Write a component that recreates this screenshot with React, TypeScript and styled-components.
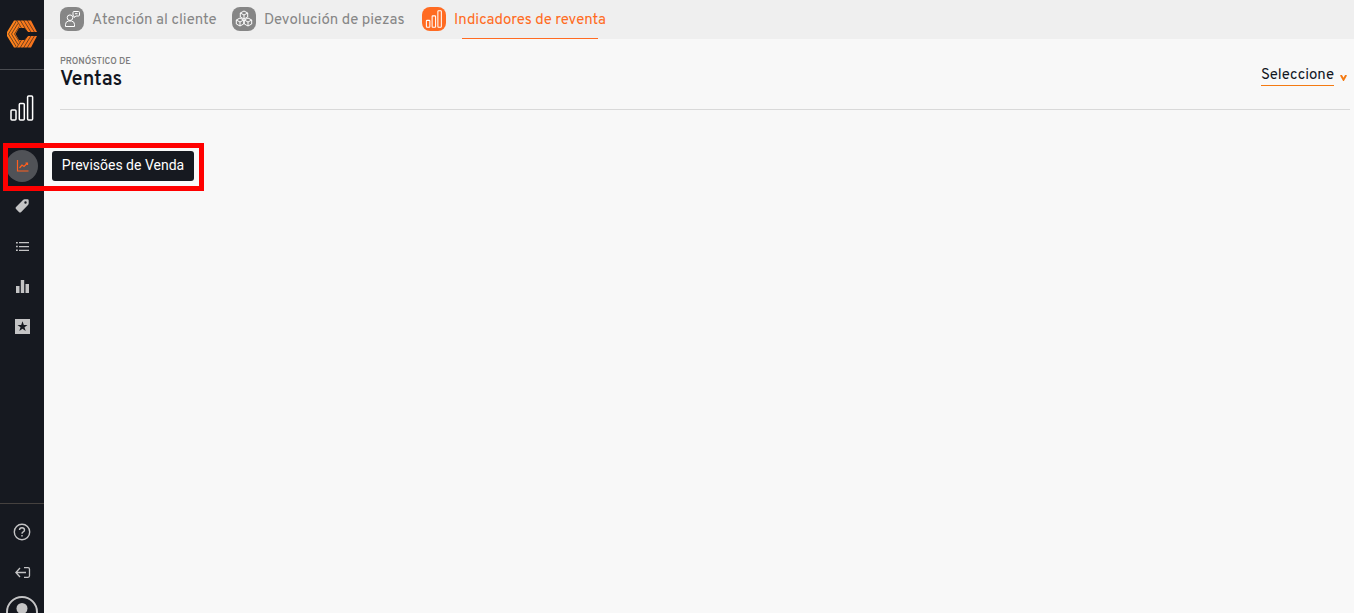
import React from "react";
import styled, { createGlobalStyle, css } from "styled-components";

const GlobalStyle = createGlobalStyle`
  * { box-sizing: border-box; }
  body {
    margin: 0;
    background: #f8f8f8;
    color: #12161f;
    font-family: Overpass, Roboto, "Liberation Sans", sans-serif;
  }
`;

const Shell = styled.div`
  display: flex;
  min-height: 100vh;
`;

const Sidebar = styled.aside`
  display: flex;
  flex-direction: column;
  flex: none;
  width: 44px;
  height: 100vh;
  background: #161920;
  color: #c4c4c5;
`;

const Brand = styled.a`
  display: flex;
  align-items: center;
  justify-content: center;
  height: 70px;
  padding-bottom: 1px;
  border-bottom: 1px solid #4a4c51;
`;

const Module = styled.div`
  display: flex;
  align-items: center;
  justify-content: center;
  height: 76px;
  color: #fff;
`;

const Menu = styled.nav`
  display: flex;
  flex-direction: column;
  flex: 1;
`;

const MenuItem = styled.div`
  position: relative;
  display: flex;
  align-items: center;
  justify-content: center;
  height: 40px;
`;

const IconButton = styled.button<{ $active?: boolean }>`
  display: flex;
  align-items: center;
  justify-content: center;
  width: 32px;
  height: 32px;
  padding: 0;
  border: 0;
  border-radius: 50%;
  background: ${(p) => (p.$active ? "#505257" : "transparent")};
  color: ${(p) => (p.$active ? "#ff5f1f" : "inherit")};
  cursor: pointer;
`;

const Tooltip = styled.span`
  position: absolute;
  top: 5px;
  left: 52px;
  width: 142px;
  padding-bottom: 2px;
  border-radius: 3px;
  background: #161920;
  color: #fff;
  font-family: Roboto, "Liberation Sans", sans-serif;
  font-size: 14px;
  font-weight: 400;
  line-height: 28px;
  text-align: center;
  white-space: nowrap;
`;

const Highlight = styled.span`
  position: absolute;
  top: -3px;
  left: 3px;
  width: 201px;
  height: 48px;
  border: 5px solid #f00;
  pointer-events: none;
`;

const SidebarFooter = styled.div`
  display: flex;
  flex-direction: column;
  height: 110px;
  padding-top: 8px;
  border-top: 1px solid #45413f;
  overflow: hidden;
`;

const FooterItem = styled(MenuItem)`
  flex: none;
`;

const Main = styled.main`
  flex: 1;
  min-width: 0;
`;

const Tabs = styled.nav`
  display: flex;
  gap: 16px;
  height: 39px;
  padding-left: 16px;
  background: #efefef;
`;

const Tab = styled.a<{ $active?: boolean }>`
  position: relative;
  display: flex;
  align-items: flex-start;
  gap: 8px;
  padding-top: 7px;
  color: ${(p) => (p.$active ? "#ff6b22" : "#868686")};
  font-size: 15px;
  line-height: 24px;
  text-decoration: none;
  white-space: nowrap;
  ${(p) =>
    p.$active &&
    css`
      &::after {
        content: "";
        position: absolute;
        right: 8px;
        bottom: 0;
        left: 40px;
        height: 1px;
        background: #ff6b22;
      }
    `}
`;

const TabIcon = styled.span<{ $active?: boolean }>`
  display: flex;
  align-items: center;
  justify-content: center;
  width: 24px;
  height: 24px;
  border-radius: 8px;
  background: ${(p) => (p.$active ? "#ff6b22" : "#868686")};
  color: #fff;
`;

const TabLabel = styled.span<{ $width: number }>`
  width: ${(p) => p.$width}px;
  padding-top: 2px;
`;

const PageHeader = styled.header`
  display: flex;
  align-items: flex-start;
  justify-content: space-between;
  height: 71px;
  margin: 0 4px 0 16px;
  padding-top: 16px;
  border-bottom: 1px solid #d9d9d9;
`;

const Heading = styled.div`
  padding-top: 1px;
`;

const Eyebrow = styled.p`
  margin: 0;
  color: #7c7c7c;
  font-size: 9px;
  font-weight: 600;
  line-height: 12px;
  text-transform: uppercase;
`;

const Title = styled.h1`
  margin: 0;
  font-size: 20px;
  font-weight: 600;
  line-height: 24px;
`;

const Picker = styled.label`
  display: flex;
  align-items: center;
  gap: 6px;
  padding: 7px 3px 0 0;
`;

const Select = styled.select`
  appearance: none;
  width: 73px;
  height: 24px;
  padding: 4px 0 0;
  border: 0;
  border-bottom: 1px solid #f47a12;
  border-radius: 0;
  background: transparent;
  color: #12161f;
  font: inherit;
  font-size: 15px;
`;

const Caret = styled.svg`
  margin-top: 8px;
`;

const Bars = ({ size, stroke }: { size: number; stroke: number }) => (
  <svg width={size} height={size} viewBox="0 0 24 26" fill="none" stroke="currentColor" strokeWidth={stroke}>
    <rect x="1" y="15" width="5" height="10" rx="1" />
    <rect x="9.300" y="8.500" width="5" height="16.500" rx="1" />
    <rect x="17.600" y="1" width="5" height="24" rx="1" />
  </svg>
);

const LogoHalf = () => (
  <>
    <path d="M7 .500H24L30 12H21L17.500 8H12L8.500 14H0V12Z" fill="url(#brand)" />
    <g fill="none" stroke="#161920" strokeWidth="0.600">
      <path clipPath="url(#arm)" d="M9.500 0L17.500 13M13 0L21 13M16.500 0L24.500 13M20 0L28 13" />
      <path clipPath="url(#side)" d="M11 -1.500L1.500 14M12.500 1L4.500 14M14.500 3L7.500 14" />
    </g>
  </>
);

const Logo = () => (
  <svg width="30" height="28" viewBox="0 0 30 28" aria-label="Inicio">
    <defs>
      <linearGradient id="brand" x1="0" y1="0" x2="1" y2="0">
        <stop offset="0" stopColor="#ff861c" />
        <stop offset="1" stopColor="#f4701c" />
      </linearGradient>
      <clipPath id="arm">
        <path d="M8.500 0H24L30 12H20L17 8H13.400Z" />
      </clipPath>
      <clipPath id="side">
        <path d="M0 0H8.500L13.400 8L9 14H0Z" />
      </clipPath>
    </defs>
    <LogoHalf />
    <g transform="translate(0 28) scale(1 -1)">
      <LogoHalf />
    </g>
  </svg>
);

const ChartLine = () => (
  <svg width="13" height="12" viewBox="0 0 13 12" fill="none" stroke="currentColor" strokeWidth="1.200">
    <path d="M1.500 0V11H12.500" />
    <path d="M3.500 8L6 5L8 6.500L11.500 3M9.500 3H11.500V5" />
  </svg>
);

const Tag = () => (
  <svg width="14" height="14" viewBox="0 0 14 14" fill="currentColor">
    <path
      fillRule="evenodd"
      d="M8 1Q8.700.300 9.700.300H12.500Q13.700.300 13.700 1.500V4.300Q13.700 5.300 13 6L6.200 12.900Q5 14 3.900 12.900L1 10Q0 9 1 7.900ZM10.500 2.300A1.200 1.200 0 1 0 10.500 4.700A1.200 1.200 0 1 0 10.500 2.300Z"
    />
  </svg>
);

const List = () => (
  <svg width="13" height="9" viewBox="0 0 13 9" fill="currentColor">
    <path d="M3 0H13V1.300H3ZM3 3.900H13V5.200H3ZM3 7.700H13V9H3Z" />
    <path d="M0 0H1.800V1.500H0ZM0 3.800H1.800V5.300H0ZM0 7.500H1.800V9H0Z" />
  </svg>
);

const Columns = () => (
  <svg width="13" height="13" viewBox="0 0 13 13" fill="currentColor">
    <path d="M0 6H3.500V13H0ZM4.800 0H8.200V13H4.800ZM9.500 4H13V13H9.500Z" />
  </svg>
);

const StarBox = () => (
  <svg width="15" height="15" viewBox="0 0 15 15">
    <path fill="currentColor" d="M0 0H15V15H0Z" />
    <path fill="#161920" d="M7.500 2.200L8.800 6H12.500L9.500 8.200L10.700 12L7.500 9.700L4.300 12L5.500 8.200L2.500 6H6.200Z" />
  </svg>
);

const Help = () => (
  <svg width="18" height="18" viewBox="0 0 18 18" fill="none" stroke="currentColor" strokeWidth="1.400">
    <circle cx="9" cy="9" r="7.700" />
    <path d="M6.500 7Q6.500 4.700 9 4.700T11.500 7Q11.500 8.200 10.200 8.900Q9 9.500 9 10.700M9 12V13.500" />
  </svg>
);

const Logout = () => (
  <svg width="18" height="14" viewBox="-2 -2 18 14" fill="none" stroke="currentColor" strokeWidth="1.300">
    <path d="M11 5.500H1M5 1L.900 5.500L5 10M9 .700H13Q14.500 .700 14.500 2.200V8.800Q14.500 10.300 13 10.300H9" />
  </svg>
);

const Avatar = () => (
  <svg width="32" height="32" viewBox="0 0 32 32">
    <circle cx="16" cy="16" r="15" fill="none" stroke="currentColor" strokeWidth="2" />
    <circle cx="16" cy="12.500" r="5.500" fill="currentColor" />
    <path d="M6 25Q16 15 26 25Q16 32 6 25Z" fill="currentColor" />
  </svg>
);

const Support = () => (
  <svg width="16" height="18" viewBox="0 0 16 18" fill="none" stroke="currentColor">
    <circle cx="6" cy="7.700" r="2.800" />
    <path d="M1.500 16.500V14.500Q1.500 11.500 4.500 11H7.500Q10.500 11.500 10.500 14.500V16.500Z" />
    <path d="M9 2.500Q9 1.500 10 1.500H14.500Q15.500 1.500 15.500 2.500V5Q15.500 6 14.500 6H12L10 7.500V6Q9 6 9 5ZM11 3.700H13.500" />
  </svg>
);

const Cubes = () => (
  <svg width="18" height="18" viewBox="0 0 18 18" fill="none" stroke="currentColor" strokeWidth="1">
    {[
      [9, 5],
      [5, 12],
      [13, 12],
    ].map(([x, y]) => (
      <path
        key={x}
        transform={`translate(${x} ${y})`}
        d="M0-4L3.700-2V2L0 4L-3.700 2V-2ZM-3.700-2L0 0L3.700-2M0 0V4"
      />
    ))}
  </svg>
);

const CaretV = () => (
  <Caret width="7" height="6" viewBox="0 0 7 6" fill="none" stroke="#f47a12" strokeWidth="2" aria-hidden="true">
    <path d="M.800 0L3.500 4.700L6.200 0" />
  </Caret>
);

export default function App() {
  return (
    <>
      <GlobalStyle />
      <Shell>
        <Sidebar>
          <Brand href="#">
            <Logo />
          </Brand>
          <Module>
            <Bars size={26} stroke={1.5} />
          </Module>
          <Menu>
            <MenuItem>
              <IconButton $active aria-describedby="forecast-tip">
                <ChartLine />
              </IconButton>
              <Tooltip id="forecast-tip" role="tooltip">Previsões de Venda</Tooltip>
              <Highlight />
            </MenuItem>
            <MenuItem><IconButton><Tag /></IconButton></MenuItem>
            <MenuItem><IconButton><List /></IconButton></MenuItem>
            <MenuItem><IconButton><Columns /></IconButton></MenuItem>
            <MenuItem><IconButton><StarBox /></IconButton></MenuItem>
          </Menu>
          <SidebarFooter>
            <FooterItem><IconButton><Help /></IconButton></FooterItem>
            <FooterItem><IconButton><Logout /></IconButton></FooterItem>
            <FooterItem><IconButton><Avatar /></IconButton></FooterItem>
          </SidebarFooter>
        </Sidebar>
        <Main>
          <Tabs>
            <Tab href="#">
              <TabIcon><Support /></TabIcon>
              <TabLabel $width={124}>Atención al cliente</TabLabel>
            </Tab>
            <Tab href="#">
              <TabIcon><Cubes /></TabIcon>
              <TabLabel $width={142}>Devolución de piezas</TabLabel>
            </Tab>
            <Tab href="#" $active aria-current="page">
              <TabIcon $active><Bars size={18} stroke={1.5} /></TabIcon>
              <TabLabel $width={152}>Indicadores de reventa</TabLabel>
            </Tab>
          </Tabs>
          <PageHeader>
            <Heading>
              <Eyebrow>Pronóstico de</Eyebrow>
              <Title>Ventas</Title>
            </Heading>
            <Picker>
              <Select aria-label="Seleccione">
                <option>Seleccione</option>
              </Select>
              <CaretV />
            </Picker>
          </PageHeader>
        </Main>
      </Shell>
    </>
  );
}
